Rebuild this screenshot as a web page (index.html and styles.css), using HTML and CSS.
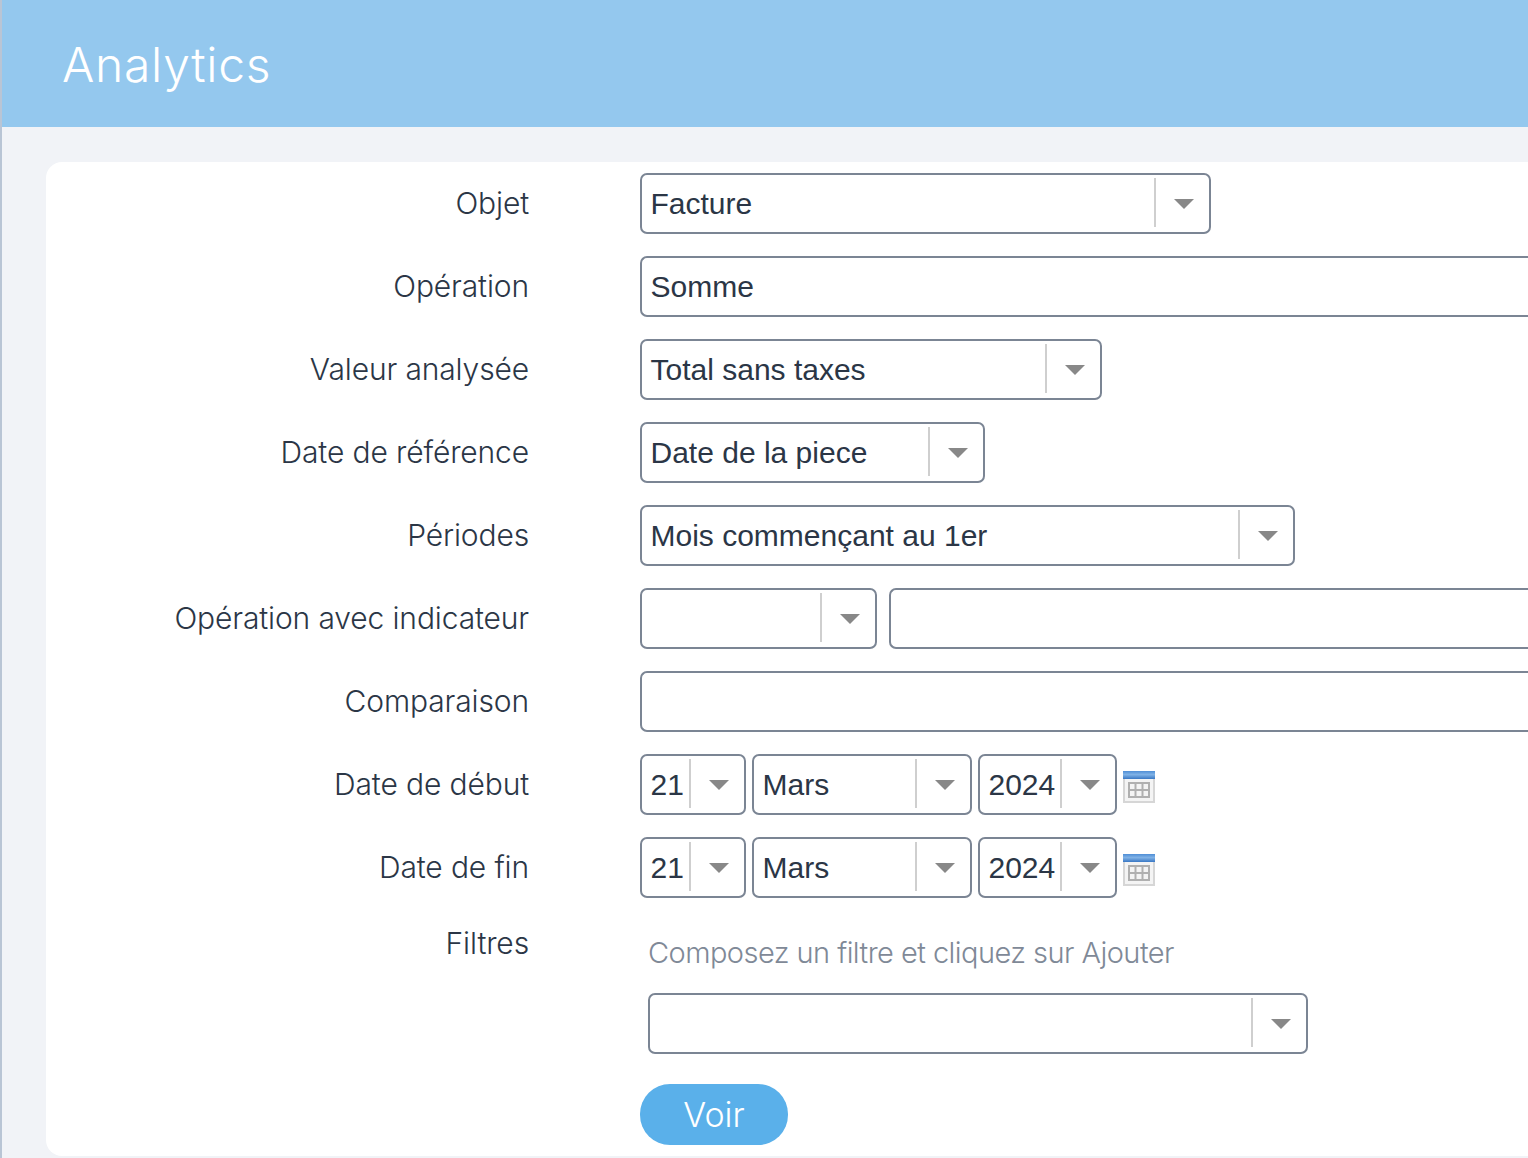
FILE: index.html
```html
<!DOCTYPE html>
<html lang="fr">
<head>
<meta charset="utf-8">
<title>Analytics</title>
<link rel="stylesheet" href="styles.css">
</head>
<body>
<div class="page">
  <header class="header"><h1 class="title">Analytics</h1></header>
  <main class="card">
    <form class="form">
      <div class="row"><label class="label">Objet</label><div class="controls">
        <div class="select w-objet"><span class="value">Facture</span><span class="arrow"></span></div>
      </div></div>
      <div class="row"><label class="label">Opération</label><div class="controls">
        <div class="input w-full"><span class="value">Somme</span></div>
      </div></div>
      <div class="row"><label class="label">Valeur analysée</label><div class="controls">
        <div class="select w-valeur"><span class="value">Total sans taxes</span><span class="arrow"></span></div>
      </div></div>
      <div class="row"><label class="label">Date de référence</label><div class="controls">
        <div class="select w-ref"><span class="value">Date de la piece</span><span class="arrow"></span></div>
      </div></div>
      <div class="row"><label class="label">Périodes</label><div class="controls">
        <div class="select w-periode"><span class="value">Mois commençant au 1er</span><span class="arrow"></span></div>
      </div></div>
      <div class="row"><label class="label">Opération avec indicateur</label><div class="controls controls-wide">
        <div class="select w-op"><span class="value"></span><span class="arrow"></span></div>
        <div class="input w-full"></div>
      </div></div>
      <div class="row"><label class="label">Comparaison</label><div class="controls">
        <div class="input w-full"></div>
      </div></div>
      <div class="row"><label class="label">Date de début</label><div class="controls">
        <div class="select w-day"><span class="value">21</span><span class="arrow"></span></div>
        <div class="select w-month"><span class="value">Mars</span><span class="arrow"></span></div>
        <div class="select w-year"><span class="value">2024</span><span class="arrow"></span></div>
        <svg class="cal" viewBox="0 0 32 32" aria-hidden="true"><defs><linearGradient id="calbar" x1="0" y1="0" x2="0" y2="1"><stop offset="0" stop-color="#4f8ed6"/><stop offset="0.45" stop-color="#80b2e6"/><stop offset="1" stop-color="#3a78c4"/></linearGradient></defs><rect y="7" width="32" height="25" fill="#d6d6d6"/><rect x="2" y="8" width="28" height="22" fill="#f4f4f4"/><rect width="32" height="8" fill="url(#calbar)"/><g fill="none" stroke="#b0b0b0" stroke-width="2"><rect x="6" y="12" width="20" height="14"/><path d="M12.500 12v14M19.500 12v14M6 19h20"/></g></svg>
      </div></div>
      <div class="row"><label class="label">Date de fin</label><div class="controls">
        <div class="select w-day"><span class="value">21</span><span class="arrow"></span></div>
        <div class="select w-month"><span class="value">Mars</span><span class="arrow"></span></div>
        <div class="select w-year"><span class="value">2024</span><span class="arrow"></span></div>
        <svg class="cal" viewBox="0 0 32 32" aria-hidden="true"><rect y="7" width="32" height="25" fill="#d6d6d6"/><rect x="2" y="8" width="28" height="22" fill="#f4f4f4"/><rect width="32" height="8" fill="url(#calbar)"/><g fill="none" stroke="#b0b0b0" stroke-width="2"><rect x="6" y="12" width="20" height="14"/><path d="M12.500 12v14M19.500 12v14M6 19h20"/></g></svg>
      </div></div>
      <div class="row row-filters"><label class="label">Filtres</label><div class="filters">
        <p class="hint">Composez un filtre et cliquez sur Ajouter</p>
        <div class="select w-filter"><span class="value"></span><span class="arrow"></span></div>
      </div></div>
      <div class="row row-submit"><span></span><div class="controls"><button class="btn" type="button">Voir</button></div></div>
    </form>
  </main>
</div>
</body>
</html>
```

FILE: styles.css
```css
* { box-sizing: border-box; }
html, body { margin: 0; height: 100%; overflow: hidden; }
body { background: #f1f3f7; font-family: "Inter", "Liberation Sans", sans-serif; color: #2b3646; }
.page { border-left: 2px solid #b9c5d5; height: 1158px; display: flex; flex-direction: column; }
.header { height: 127px; background: #94c8ee; padding: 2px 0 0 60px; display: flex; align-items: center; flex: none; }
.title { margin: 0; font-size: 48px; font-weight: 350; color: #fff; letter-spacing: 0.72px; }
.card { margin: 35px 0 2px 44px; background: #fff; border-radius: 16px 0 0 16px; padding-top: 11px; flex: 1; min-width: 0; }
.form { display: flex; flex-direction: column; gap: 22px; }
.row { display: grid; grid-template-columns: 483px minmax(0, 1fr); column-gap: 111px; align-items: center; }
.label { text-align: right; font-size: 30px; font-weight: 350; letter-spacing: -0.13px; line-height: 36px; padding-bottom: 2px; }
.controls { display: flex; align-items: center; gap: 6px; }
.controls-wide { gap: 12px; }
.select, .input { height: 61px; flex: none; border: 2px solid #7b8594; border-radius: 7px; background: #fff; display: flex; align-items: center; font-family: "Liberation Sans", Arial, sans-serif; font-size: 30px; }
.value { flex: 1; padding-left: 8.5px; white-space: nowrap; overflow: hidden; }
.arrow { flex: none; width: 55px; height: 49px; margin-bottom: 2px; border-left: 2px solid #cfcfcf; position: relative; }
.arrow::after { content: ""; position: absolute; left: 18px; top: 21px; border-style: solid; border-width: 10px 10.5px 0; border-color: #888 transparent transparent; }
.w-objet { width: 571px; }
.w-full { flex: 1; min-width: 0; border-right: 0; border-radius: 7px 0 0 7px; }
.w-valeur { width: 462px; }
.w-ref { width: 345px; }
.w-periode { width: 655px; }
.w-op { width: 237px; }
.w-day { width: 106px; }
.w-month { width: 220px; }
.w-year { width: 139px; }
.w-filter { width: 660px; }
.cal { width: 32px; height: 32px; flex: none; margin-top: 5px; }
.row-filters { align-items: start; margin-top: 5px; }
.filters { padding-left: 8px; }
.hint { margin: 10px 0 22px; font-size: 29px; font-weight: 350; line-height: 36px; letter-spacing: -0.55px; color: #7f8997; }
.row-submit { margin-top: 8px; }
.btn { width: 148px; height: 61px; border: 0; border-radius: 30px; background: #5ab0ea; color: #fff; font-family: "Inter", sans-serif; font-size: 34px; font-weight: 300; padding: 0; }
```
